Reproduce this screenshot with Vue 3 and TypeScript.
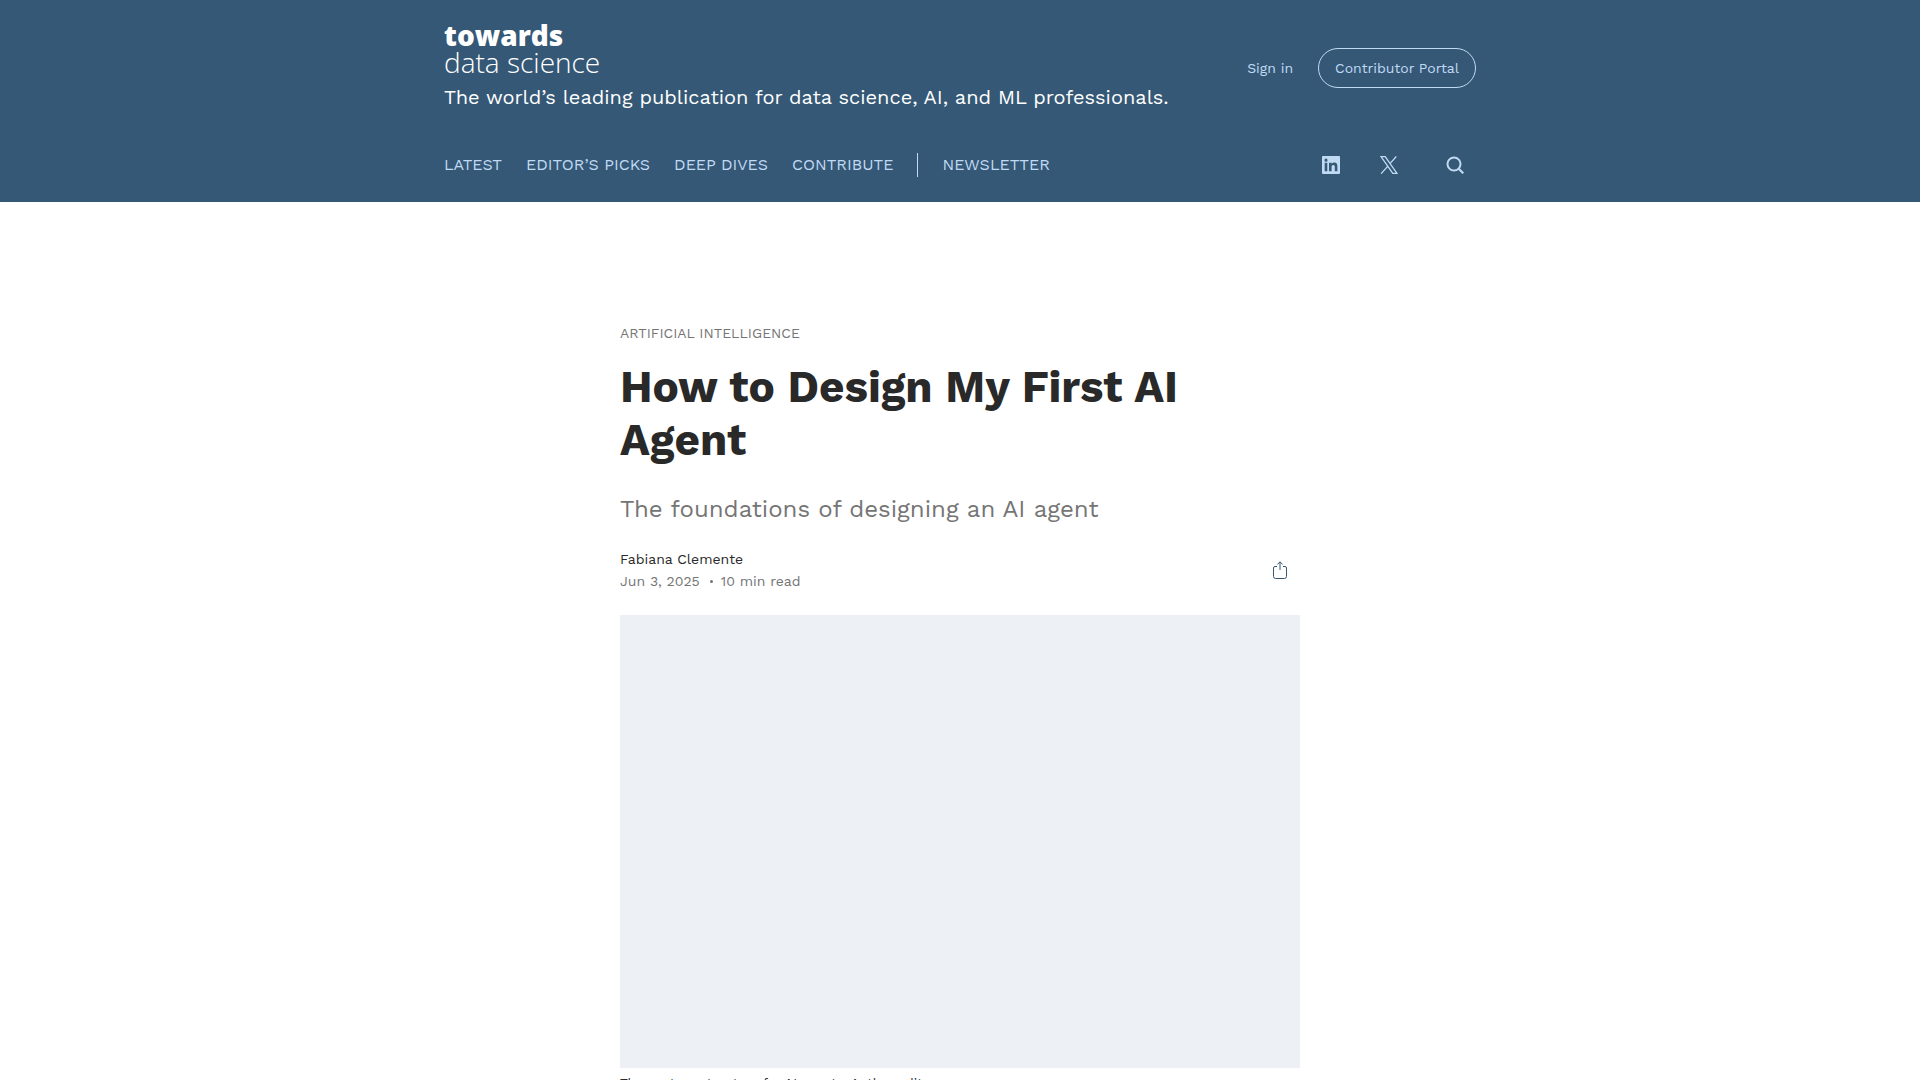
<script setup lang="ts">
const primary: string[] = ['Latest', 'Editor’s Picks', 'Deep Dives', 'Contribute']
</script>

<template>
  <div class="page">
    <header class="site-header">
      <div class="container">
        <div class="masthead">
          <div class="brand">
            <a class="logo" href="#"><strong>towards</strong><span>data science</span></a>
            <p class="tagline">The world’s leading publication for data science, AI, and ML professionals.</p>
          </div>
          <div class="account">
            <a class="sign-in" href="#">Sign in</a>
            <a class="portal" href="#">Contributor Portal</a>
          </div>
        </div>
        <div class="nav-row">
          <nav class="nav" aria-label="Primary">
            <a v-for="item in primary" :key="item" href="#">{{ item }}</a>
            <a class="newsletter" href="#">Newsletter</a>
          </nav>
          <div class="tools">
            <a href="#" aria-label="LinkedIn">
              <svg width="18" height="18" viewBox="0 0 18 18">
                <path fill="currentColor" fill-rule="evenodd" d="M1 0h16a1 1 0 0 1 1 1v16a1 1 0 0 1-1 1H1a1 1 0 0 1-1-1V1a1 1 0 0 1 1-1ZM2.700 6.800v8.500h2.600V6.800ZM4 2.600a1.500 1.500 0 1 0 0 3.100 1.500 1.500 0 0 0 0-3.100ZM7 6.800v8.500h2.600v-4.200c0-1.200.5-2.100 1.700-2.100s1.500.9 1.500 2.100v4.200h2.600v-4.700c0-2.500-.9-4-3.100-4-1.300 0-2.200.6-2.700 1.400V6.800Z" />
              </svg>
            </a>
            <a href="#" aria-label="X">
              <svg width="18" height="18" viewBox="0 0 18 18">
                <path fill="none" stroke="currentColor" stroke-width="1.300" d="M1 .6h4.200L17 17.400h-4.200ZM16.300.5l-6.600 7.400M7.900 10.100 1.100 17.600" />
              </svg>
            </a>
            <button class="search" type="button" aria-label="Search">
              <svg width="18" height="18" viewBox="0 0 18 18">
                <circle cx="8" cy="8" r="6.500" fill="none" stroke="currentColor" stroke-width="2" />
                <path d="m12.500 12.500 4.800 4.800" stroke="currentColor" stroke-width="2.200" />
              </svg>
            </button>
          </div>
        </div>
      </div>
    </header>

    <main class="article">
      <a class="category" href="#">Artificial Intelligence</a>
      <h1>How to Design My First AI Agent</h1>
      <p class="subtitle">The foundations of designing an AI agent</p>
      <div class="byline">
        <div class="meta">
          <a class="author" href="#">Fabiana Clemente</a>
          <p class="date"><time datetime="2025-06-03">Jun 3, 2025</time><i class="dot"></i><span>10 min read</span></p>
        </div>
        <button class="share" type="button" aria-label="Share">
          <svg width="14" height="18" viewBox="0 0 14 18">
            <path fill="none" stroke="currentColor" d="M4 5.500H2Q.5 5.500.5 7v8.500Q.5 17.500 2.500 17.500h9q2 0 2-2V7q0-1.500-1.500-1.500h-2M7 9V1M4.300 3.500 7 .8l2.700 2.700" />
          </svg>
        </button>
      </div>
      <figure>
        <div class="placeholder"></div>
        <figcaption>The custom structure for AI agents. Author edit</figcaption>
      </figure>
    </main>
  </div>
</template>

<style>
body {
  margin: 0;
  background: #fff;
}
</style>

<style scoped>
.page {
  height: 100vh;
  overflow: hidden;
  font-family: "Work Sans", Inter, sans-serif;
  color: #292929;
}
a {
  color: inherit;
  text-decoration: none;
}
p, h1, figure {
  margin: 0;
}
button {
  padding: 0;
  border: 0;
  background: none;
  color: inherit;
  cursor: pointer;
}
svg {
  display: block;
}
.site-header {
  background: #355876;
  color: #c0daf4;
}
.container {
  box-sizing: border-box;
  max-width: 1080px;
  margin: 0 auto;
  padding: 23px 24px 25px;
}
.masthead {
  display: flex;
  justify-content: space-between;
  align-items: center;
}
.logo {
  display: flex;
  flex-direction: column;
  font: 28px/28px "Open Sans", sans-serif;
  color: #fff;
}
.logo strong {
  font-weight: 800;
  line-height: 25px;
}
.logo span {
  font-weight: 340;
}
.tagline {
  margin-top: 8px;
  color: #fff;
  font-size: 20px;
  line-height: 26px;
}
.account {
  display: flex;
  align-items: center;
  gap: 25px;
  padding-top: 3px;
  font-size: 14px;
}
.portal {
  padding: 0 16px;
  border: 1px solid currentColor;
  border-radius: 20px;
  line-height: 38px;
}
.nav-row {
  display: flex;
  justify-content: space-between;
  align-items: center;
  margin-top: 43px;
}
.nav {
  display: flex;
  gap: 24px;
  font-size: 16px;
  line-height: 24px;
  text-transform: uppercase;
}
.newsletter {
  padding-left: 24px;
  border-left: 1px solid currentColor;
}
.tools {
  display: flex;
  align-items: center;
  gap: 40px;
  padding-right: 12px;
}
.search {
  margin-left: 8px;
}
.article {
  max-width: 680px;
  margin: 0 auto;
  padding: 120px 24px 0;
}
.category {
  display: block;
  color: #757575;
  font-size: 14px;
  line-height: 22px;
  text-transform: uppercase;
}
h1 {
  margin-top: 17px;
  font-size: 44px;
  line-height: 53px;
  font-weight: 700;
}
.subtitle {
  margin-top: 24px;
  color: #757575;
  font-size: 24px;
  line-height: 36px;
}
.byline {
  display: flex;
  justify-content: space-between;
  align-items: center;
  margin-top: 21px;
  padding-right: 13px;
  font-size: 14px;
  line-height: 22px;
}
.author {
  display: block;
}
.date {
  display: flex;
  align-items: center;
  color: #757575;
}
.dot {
  width: 3px;
  height: 3px;
  margin: 0 8px 0 10px;
  border-radius: 50%;
  background: currentColor;
}
.share {
  color: #355876;
}
figure {
  margin-top: 23px;
}
.placeholder {
  aspect-ratio: 680 / 453;
  background: #edf0f5;
}
figcaption {
  margin-top: 6px;
  font-size: 13px;
  line-height: 20px;
}
</style>
